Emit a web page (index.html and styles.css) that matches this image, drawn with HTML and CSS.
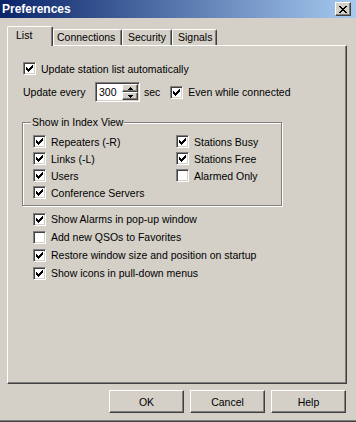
FILE: index.html
```html
<!DOCTYPE html>
<html lang="en">
<head>
    <meta charset="UTF-8">
    <title>Preferences</title>
    <link rel="stylesheet" href="styles.css">
</head>
<body>
    <div class="window">
        <div class="titlebar">
            <span class="titlebar__text">Preferences</span>
            <span class="titlebar__close">
                <svg width="8" height="7" viewBox="0 0 8 7" shape-rendering="crispEdges">
                    <path d="M0 0h2v1H0z M6 0h2v1H6z M1 1h2v1H1z M5 1h2v1H5z M2 2h4v1H2z M3 3h2v1H3z M2 4h4v1H2z M1 5h2v1H1z M5 5h2v1H5z M0 6h2v1H0z M6 6h2v1H6z" fill="#000"/>
                </svg>
            </span>
        </div>

        <div class="tabs">
            <div class="tab tab--active tab--list">List</div>
            <div class="tab tab--connections">Connections</div>
            <div class="tab tab--security">Security</div>
            <div class="tab tab--signals">Signals</div>
        </div>

        <div class="panel">
            <label class="cb">
                <span class="cb__box"><svg class="cb__mark" viewBox="0 0 7 7" shape-rendering="crispEdges"><path d="M0 2h1v3H0z M1 3h1v3H1z M2 4h1v3H2z M3 3h1v3H3z M4 2h1v3H4z M5 1h1v3H5z M6 0h1v3H6z"/></svg></span>
                <span>Update station list automatically</span>
            </label>

            <div class="every">
                <span class="every__label">Update every</span>
                <span class="spin">
                    <span class="spin__value">300</span>
                    <span class="spin__buttons">
                        <span class="spin__btn"><svg width="5" height="3" viewBox="0 0 5 3" shape-rendering="crispEdges"><path d="M2 0h1v1H2z M1 1h3v1H1z M0 2h5v1H0z"/></svg></span>
                        <span class="spin__btn"><svg width="5" height="3" viewBox="0 0 5 3" shape-rendering="crispEdges"><path d="M0 0h5v1H0z M1 1h3v1H1z M2 2h1v1H2z"/></svg></span>
                    </span>
                </span>
                <span class="every__sec">sec</span>
                <label class="cb">
                    <span class="cb__box"><svg class="cb__mark" viewBox="0 0 7 7" shape-rendering="crispEdges"><path d="M0 2h1v3H0z M1 3h1v3H1z M2 4h1v3H2z M3 3h1v3H3z M4 2h1v3H4z M5 1h1v3H5z M6 0h1v3H6z"/></svg></span>
                    <span>Even while connected</span>
                </label>
            </div>

            <div class="group">
                <span class="group__title">Show in Index View</span>
                <label class="cb"><span class="cb__box"><svg class="cb__mark" viewBox="0 0 7 7" shape-rendering="crispEdges"><path d="M0 2h1v3H0z M1 3h1v3H1z M2 4h1v3H2z M3 3h1v3H3z M4 2h1v3H4z M5 1h1v3H5z M6 0h1v3H6z"/></svg></span><span>Repeaters (-R)</span></label>
                <label class="cb"><span class="cb__box"><svg class="cb__mark" viewBox="0 0 7 7" shape-rendering="crispEdges"><path d="M0 2h1v3H0z M1 3h1v3H1z M2 4h1v3H2z M3 3h1v3H3z M4 2h1v3H4z M5 1h1v3H5z M6 0h1v3H6z"/></svg></span><span>Links (-L)</span></label>
                <label class="cb"><span class="cb__box"><svg class="cb__mark" viewBox="0 0 7 7" shape-rendering="crispEdges"><path d="M0 2h1v3H0z M1 3h1v3H1z M2 4h1v3H2z M3 3h1v3H3z M4 2h1v3H4z M5 1h1v3H5z M6 0h1v3H6z"/></svg></span><span>Users</span></label>
                <label class="cb"><span class="cb__box"><svg class="cb__mark" viewBox="0 0 7 7" shape-rendering="crispEdges"><path d="M0 2h1v3H0z M1 3h1v3H1z M2 4h1v3H2z M3 3h1v3H3z M4 2h1v3H4z M5 1h1v3H5z M6 0h1v3H6z"/></svg></span><span>Conference Servers</span></label>
                <label class="cb"><span class="cb__box"><svg class="cb__mark" viewBox="0 0 7 7" shape-rendering="crispEdges"><path d="M0 2h1v3H0z M1 3h1v3H1z M2 4h1v3H2z M3 3h1v3H3z M4 2h1v3H4z M5 1h1v3H5z M6 0h1v3H6z"/></svg></span><span>Stations Busy</span></label>
                <label class="cb"><span class="cb__box"><svg class="cb__mark" viewBox="0 0 7 7" shape-rendering="crispEdges"><path d="M0 2h1v3H0z M1 3h1v3H1z M2 4h1v3H2z M3 3h1v3H3z M4 2h1v3H4z M5 1h1v3H5z M6 0h1v3H6z"/></svg></span><span>Stations Free</span></label>
                <label class="cb"><span class="cb__box"></span><span>Alarmed Only</span></label>
            </div>

            <div class="options">
                <label class="cb"><span class="cb__box"><svg class="cb__mark" viewBox="0 0 7 7" shape-rendering="crispEdges"><path d="M0 2h1v3H0z M1 3h1v3H1z M2 4h1v3H2z M3 3h1v3H3z M4 2h1v3H4z M5 1h1v3H5z M6 0h1v3H6z"/></svg></span><span>Show Alarms in pop-up window</span></label>
                <label class="cb"><span class="cb__box"></span><span>Add new QSOs to Favorites</span></label>
                <label class="cb"><span class="cb__box"><svg class="cb__mark" viewBox="0 0 7 7" shape-rendering="crispEdges"><path d="M0 2h1v3H0z M1 3h1v3H1z M2 4h1v3H2z M3 3h1v3H3z M4 2h1v3H4z M5 1h1v3H5z M6 0h1v3H6z"/></svg></span><span>Restore window size and position on startup</span></label>
                <label class="cb"><span class="cb__box"><svg class="cb__mark" viewBox="0 0 7 7" shape-rendering="crispEdges"><path d="M0 2h1v3H0z M1 3h1v3H1z M2 4h1v3H2z M3 3h1v3H3z M4 2h1v3H4z M5 1h1v3H5z M6 0h1v3H6z"/></svg></span><span>Show icons in pull-down menus</span></label>
            </div>
        </div>

        <div class="buttons">
            <button class="btn" type="button">OK</button>
            <button class="btn" type="button">Cancel</button>
            <button class="btn" type="button">Help</button>
        </div>
    </div>
</body>
</html>
```

FILE: styles.css
```css
* {
    box-sizing: border-box;
}
html, body {
    margin: 0;
    padding: 0;
}
body {
    background: #D4D0C8;
    font-family: "Liberation Sans", Arial, sans-serif;
    font-size: 10.5px;
    color: #000;
}
.window {
    width: 356px;
    height: 422px;
    display: flex;
    flex-direction: column;
    border-bottom: 1px solid #404040;
    box-shadow: inset 0 -1px #808080;
}
.titlebar {
    height: 18px;
    flex: none;
    display: flex;
    align-items: center;
    justify-content: space-between;
    padding: 0 5px 0 2px;
    background: linear-gradient(90deg, #0A246A, #A6CAF0);
}
.titlebar__text {
    color: #fff;
    font-weight: 700;
    font-size: 12px;
}
.titlebar__close {
    width: 16px;
    height: 14px;
    display: flex;
    align-items: center;
    justify-content: center;
    background: #D4D0C8;
    border: 1px solid;
    border-color: #fff #404040 #404040 #fff;
    box-shadow: inset -1px -1px #808080;
}

/* tabs */
.tabs {
    height: 19px;
    margin: 8px 0 0 7px;
    display: flex;
    align-items: flex-end;
}
.tab {
    height: 16px;
    line-height: 14px;
    border: 1px solid;
    border-color: #fff #404040 transparent #fff;
    border-bottom: none;
    border-radius: 2px 2px 0 0;
    box-shadow: inset -1px 0 #808080;
    white-space: nowrap;
}
.tab--active {
    height: 20px;
    line-height: 16px;
    margin-bottom: -1px;
    position: relative;
    z-index: 1;
    background: #D4D0C8;
}
.tab--list {
    width: 46px;
    padding-left: 8px;
}
.tab--connections {
    width: 69px;
    padding-left: 3px;
}
.tab--security {
    width: 50px;
    padding-left: 5px;
}
.tab--signals {
    width: 45px;
    padding-left: 5px;
}
.panel {
    width: 340px;
    height: 339px;
    margin-left: 7px;
    padding: 16px 0 0 15px;
    border: 1px solid;
    border-color: #fff #404040 #404040 #fff;
    box-shadow: inset -1px -1px #808080;
}

/* checkbox */
.cb {
    display: flex;
    align-items: center;
    gap: 5px;
    white-space: nowrap;
}
.cb__box {
    width: 13px;
    height: 13px;
    flex: none;
    padding: 2px;
    display: flex;
    background: #fff;
    border: 1px solid;
    border-color: #808080 #fff #fff #808080;
    box-shadow: inset 1px 1px #404040, inset -1px -1px #D4D0C8;
}
.cb__mark {
    width: 7px;
    height: 7px;
}
.panel > .cb {
    height: 13px;
}

/* update every row */
.every {
    height: 20px;
    margin-top: 7px;
    display: flex;
    align-items: center;
}
.every__label {
    width: 72px;
}
.spin {
    width: 45px;
    height: 20px;
    display: flex;
    background: #fff;
    border: 1px solid;
    border-color: #808080 #fff #fff #808080;
    box-shadow: inset 1px 1px #404040, inset -1px -1px #D4D0C8;
    padding: 1px;
}
.spin__value {
    flex: 1;
    padding-left: 2px;
    line-height: 16px;
}
.spin__buttons {
    width: 16px;
    display: flex;
    flex-direction: column;
}
.spin__btn {
    flex: 1;
    display: flex;
    align-items: center;
    justify-content: center;
    background: #D4D0C8;
    border: 1px solid;
    border-color: #fff #404040 #404040 #fff;
    box-shadow: inset -1px -1px #808080;
}
.every__sec {
    margin: 0 10px 0 4px;
}

/* group box */
.group {
    width: 260px;
    height: 84px;
    margin: 20px 0 0 -1px;
    padding: 10px 0 0 10px;
    position: relative;
    border: 1px solid #808080;
    box-shadow: 1px 1px #fff, inset 1px 1px #fff;
    display: grid;
    grid-template-columns: 143px auto;
    grid-template-rows: repeat(4, 17px);
    grid-auto-flow: column;
}
.group__title {
    position: absolute;
    top: -7px;
    left: 8px;
    line-height: 13px;
    padding: 0 1px;
    background: #D4D0C8;
}
.options {
    margin: 4px 0 0 10px;
    display: grid;
    grid-auto-rows: 18px;
}

/* buttons */
.buttons {
    margin-top: 6px;
    padding-right: 10px;
    display: flex;
    justify-content: flex-end;
    gap: 6px;
}
.btn {
    width: 75px;
    height: 23px;
    padding: 0;
    font: inherit;
    color: #000;
    background: #D4D0C8;
    border: 1px solid;
    border-color: #fff #404040 #404040 #fff;
    box-shadow: inset -1px -1px #808080;
    border-radius: 0;
}
```
